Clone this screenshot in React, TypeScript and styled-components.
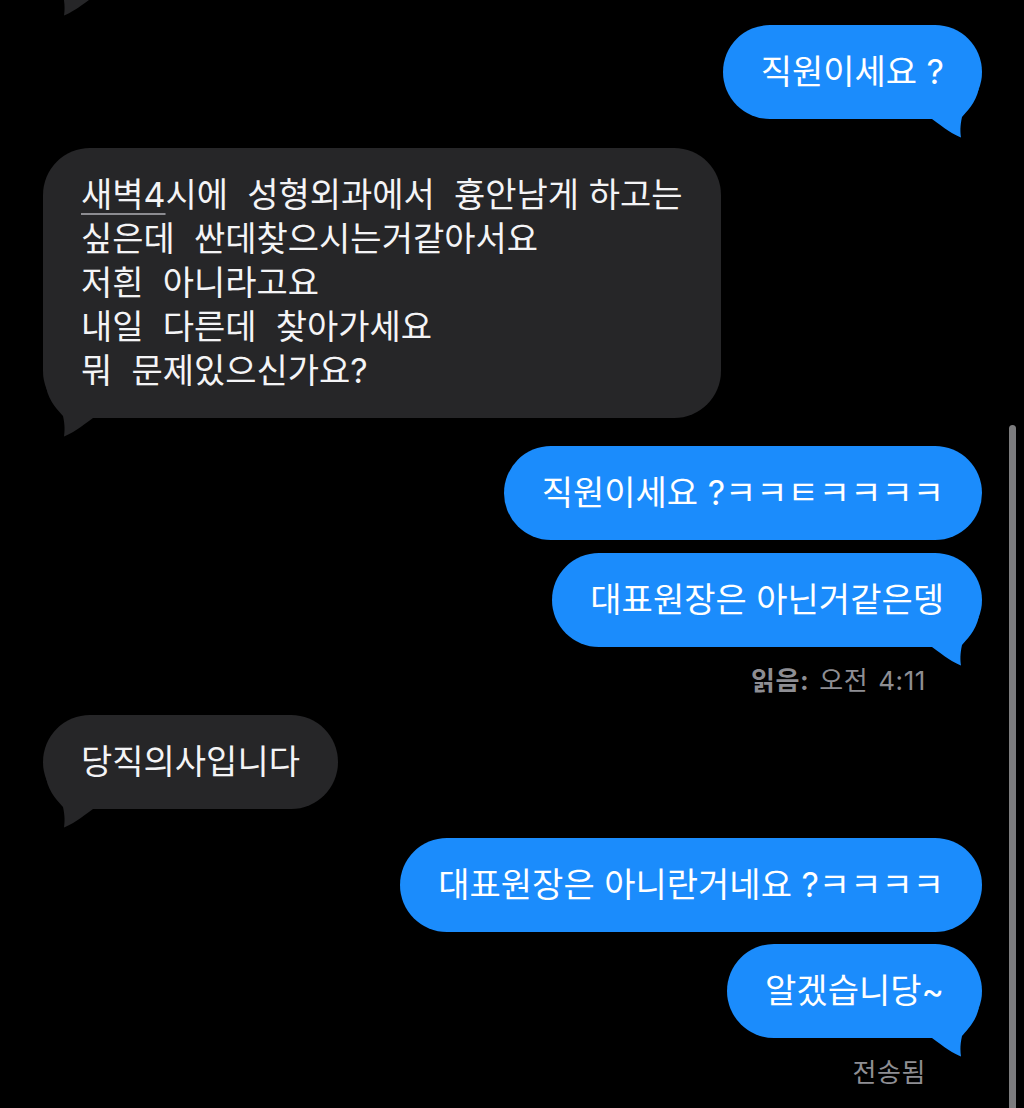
import React, { FC } from 'react';
import styled, { createGlobalStyle, css } from 'styled-components';

type Side = 'me' | 'them';

const BLUE = '#1b8cfc';
const GRAY = '#262628';

const GlobalStyle = createGlobalStyle`
  html, body {
    margin: 0;
    padding: 0;
    background: #000;
  }
  body {
    font-family: Inter, 'Noto Sans CJK KR', sans-serif;
  }
`;

const Screen = styled.div`
  position: relative;
  width: 1024px;
  height: 1108px;
  overflow: hidden;
  background: #000;
`;

const Thread = styled.div`
  display: flex;
  flex-direction: column;
  padding: 0 42px 0 43px;
`;

const Bubble = styled.div<{ $side: Side; $gap: number }>`
  position: relative;
  align-self: ${p => (p.$side === 'me' ? 'flex-end' : 'flex-start')};
  margin-top: ${p => p.$gap}px;
  padding: 25px 38px;
  border-radius: 47px;
  background: ${p => (p.$side === 'me' ? BLUE : GRAY)};
  color: ${p => (p.$side === 'me' ? '#ffffff' : '#f4f4f6')};
  font-size: 34px;
  line-height: 44px;
  white-space: pre;
`;

// bubble that scrolled off the top, only its tail is still visible
const CutBubble = styled(Bubble)`
  width: 320px;
  height: 94px;
  padding: 0;
  box-sizing: border-box;
`;

const TailSvg = styled.svg<{ $side: Side }>`
  position: absolute;
  bottom: -20px;
  width: 50px;
  height: 50px;
  ${p =>
    p.$side === 'me'
      ? css`
          right: 0;
        `
      : css`
          left: 0;
          transform: scaleX(-1);
        `}
`;

const DataLink = styled.span`
  text-decoration: underline;
  text-decoration-color: #8c8c91;
  text-decoration-thickness: 2px;
  text-underline-offset: 6px;
`;

const Status = styled.div<{ $gap: number }>`
  align-self: flex-end;
  margin-top: ${p => p.$gap}px;
  padding-right: 56px;
  color: #8e8e93;
  font-size: 26px;
  line-height: 30px;
  letter-spacing: 0.6px;
  word-spacing: 2px;
  white-space: pre;
`;

const StatusLabel = styled.span`
  font-weight: 700;
`;

const ScrollThumb = styled.div`
  position: absolute;
  top: 425px;
  bottom: 0;
  right: 8px;
  width: 7px;
  border-radius: 4px 4px 0 0;
  background: #7c7c7e;
`;

const Tail: FC<{ side: Side }> = ({ side }) => (
  <TailSvg $side={side} viewBox="0 0 50 50">
    <path
      d="M0 0 L46.7 0 C44 14 34 23 30 28 C28 37 28.2 43 29 48.5 C22 46 12 39 0 30 Z"
      fill={side === 'me' ? BLUE : GRAY}
    />
  </TailSvg>
);

const App: FC = () => {
  return (
    <Screen>
      <GlobalStyle />
      <Thread>
        <CutBubble $side="them" $gap={-97}>
          <Tail side="them" />
        </CutBubble>

        <Bubble $side="me" $gap={28}>
          직원이세요 ?
          <Tail side="me" />
        </Bubble>

        <Bubble $side="them" $gap={29}>
          <DataLink>새벽4</DataLink>
          {'시에  성형외과에서  흉안남게 하고는\n'}
          {'싶은데  싼데찾으시는거같아서요\n'}
          {'저흰  아니라고요\n'}
          {'내일  다른데  찾아가세요\n'}
          {'뭐  문제있으신가요?'}
          <Tail side="them" />
        </Bubble>

        <Bubble $side="me" $gap={28}>
          직원이세요 ?ㅋㅋㅌㅋㅋㅋㅋ
        </Bubble>
        <Bubble $side="me" $gap={13}>
          대표원장은 아닌거같은뎅
          <Tail side="me" />
        </Bubble>
        <Status $gap={19}>
          <StatusLabel>읽음:</StatusLabel> 오전 4:11
        </Status>

        <Bubble $side="them" $gap={19}>
          당직의사입니다
          <Tail side="them" />
        </Bubble>

        <Bubble $side="me" $gap={29}>
          대표원장은 아니란거네요 ?ㅋㅋㅋㅋ
        </Bubble>
        <Bubble $side="me" $gap={12}>
          알겠습니당~
          <Tail side="me" />
        </Bubble>
        <Status $gap={20}>전송됨</Status>
      </Thread>
      <ScrollThumb />
    </Screen>
  );
};

export default App;
